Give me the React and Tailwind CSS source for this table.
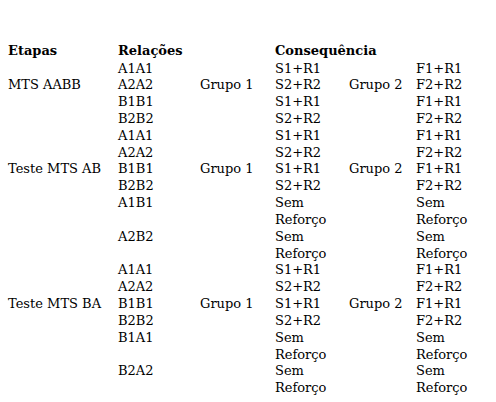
const rows = [
  ["", "A1A1", "", "S1+R1", "", "F1+R1"],
  ["MTS AABB", "A2A2", "Grupo 1", "S2+R2", "Grupo 2", "F2+R2"],
  ["", "B1B1", "", "S1+R1", "", "F1+R1"],
  ["", "B2B2", "", "S2+R2", "", "F2+R2"],
  ["", "A1A1", "", "S1+R1", "", "F1+R1"],
  ["", "A2A2", "", "S2+R2", "", "F2+R2"],
  ["Teste MTS AB", "B1B1", "Grupo 1", "S1+R1", "Grupo 2", "F1+R1"],
  ["", "B2B2", "", "S2+R2", "", "F2+R2"],
  ["", "A1B1", "", "Sem", "", "Sem"],
  ["", "", "", "Reforço", "", "Reforço"],
  ["", "A2B2", "", "Sem", "", "Sem"],
  ["", "", "", "Reforço", "", "Reforço"],
  ["", "A1A1", "", "S1+R1", "", "F1+R1"],
  ["", "A2A2", "", "S2+R2", "", "F2+R2"],
  ["Teste MTS BA", "B1B1", "Grupo 1", "S1+R1", "Grupo 2", "F1+R1"],
  ["", "B2B2", "", "S2+R2", "", "F2+R2"],
  ["", "B1A1", "", "Sem", "", "Sem"],
  ["", "", "", "Reforço", "", "Reforço"],
  ["", "B2A2", "", "Sem", "", "Sem"],
  ["", "", "", "Reforço", "", "Reforço"],
];

function Row({ cells, bold }) {
  return (
    <div className={`flex h-[16.84px] items-center whitespace-nowrap ${bold ? "font-bold" : ""}`}>
      <div className="w-[110px]">{cells[0]}</div>
      <div className="w-[82px]">{cells[1]}</div>
      <div className="w-[75px]">{cells[2]}</div>
      <div className="w-[74px]">{cells[3]}</div>
      <div className="w-[67px]">{cells[4]}</div>
      <div>{cells[5]}</div>
    </div>
  );
}

export default function App() {
  return (
    <div className="h-[402px] w-[496px] bg-white pl-[8px] pt-[42px] text-[13px] text-black" style={{ fontFamily: '"DejaVu Serif", serif' }}>
      <div className="mb-[1px]">
        <Row bold cells={["Etapas", "Relações", "", "Consequência", "", ""]} />
      </div>
      {rows.map((r, i) => (
        <Row key={i} cells={r} />
      ))}
    </div>
  );
}
